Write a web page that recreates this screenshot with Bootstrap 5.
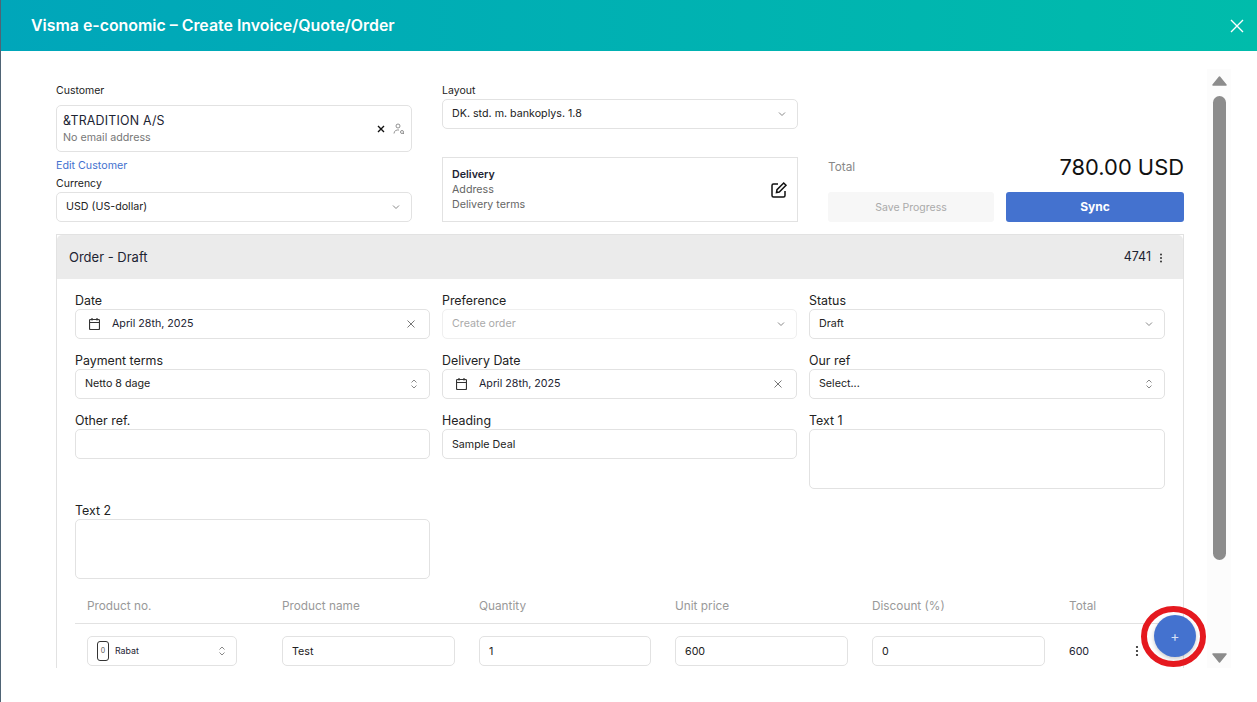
<!DOCTYPE html>
<html lang="en">
<head>
    <meta charset="UTF-8">
    <meta name="viewport" content="width=device-width, initial-scale=1.0">
    <title>Visma e-conomic</title>
    <link href="https://cdn.jsdelivr.net/npm/bootstrap@5.3.0/dist/css/bootstrap.min.css" rel="stylesheet">
    <style>
        html, body { height: 100%; overflow: hidden; }
        body { font-family: Inter, "Liberation Sans", sans-serif; color: #1d2433; background: #fff; }
        .app-shell { position: relative; height: 702px; border-left: 1px solid #4f6475; }
        .top-bar { height: 51px; padding: 0 13px 0 30px; background: linear-gradient(90deg, #00a6ba, #00bcab); color: #fff; font-size: 15.9px; font-weight: 600; }
        .work-area { height: 617px; overflow: hidden; padding-left: 55px; }
        .form-pane { width: 1128px; padding-top: 33px; flex: none; }
        .top-grid { display: grid; grid-template-columns: repeat(3, 356px); column-gap: 30px; height: 138px; }
        .field-label { display: block; height: 14px; margin-bottom: 1px; font-size: 10.5px; line-height: 14px; color: #222; }
        .customer-label { margin-bottom: 7px; }
        .customer-box { height: 47px; padding: 7px 6px; border: 1px solid #e2e2e2; border-radius: 5px; }
        .customer-name { font-size: 12.4px; line-height: 16px; letter-spacing: .2px; }
        .customer-mail { margin-top: 2px; font-size: 10.7px; line-height: 14px; color: #777; }
        .edit-link { display: block; height: 18px; margin-top: 5px; font-size: 10.7px; line-height: 18px; color: #4472cf; text-decoration: none; }
        .currency-label { margin-top: 2px; margin-bottom: 1px; }
        .form-select, .form-control { height: 30px; min-height: 30px; padding: 0 9px; border: 1px solid #e2e2e2; border-radius: 5px; font-size: 10.7px; color: #222; box-shadow: none; }
        .form-select { padding-top: 1px; background-size: 10px 10px; background-position: right 10px center; background-image: url("data:image/svg+xml,%3csvg xmlns='http://www.w3.org/2000/svg' viewBox='0 0 10 10'%3e%3cpath fill='none' stroke='%23888' d='M2 3.5 5 6.5 8 3.5'/%3e%3c/svg%3e"); }
        .form-select.updown { background-image: url("data:image/svg+xml,%3csvg xmlns='http://www.w3.org/2000/svg' viewBox='0 0 10 10'%3e%3cpath fill='none' stroke='%23888' d='M2.5 3.5 5 1 7.5 3.5M2.5 6.5 5 9 7.5 6.5'/%3e%3c/svg%3e"); }
        .form-select:disabled { background-color: #fff; border-color: #efefef; color: #aaa; opacity: 1; }
        .form-control.tall { height: 60px; resize: none; }
        .delivery-box { height: 65px; margin-top: 28px; padding: 9px; border: 1px solid #e2e2e2; font-size: 10.7px; line-height: 15px; color: #666; }
        .delivery-box strong { color: #1d2433; font-weight: 600; }
        .total-side { padding-top: 71px; }
        .total-label { padding-top: 1px; font-size: 11.8px; color: #888; }
        .total-value { font-size: 21.9px; line-height: 24px; color: #111; }
        .save-btn, .sync-btn { height: 30px; border: 0; border-radius: 3px; padding: 0; font-size: 10.5px; }
        .save-btn { width: 166px; padding-top: 1px; background: #f7f7f7; color: #aaa; }
        .sync-btn { width: 178px; background: #4472cf; color: #fff; font-size: 12px; font-weight: 700; }
        .order-panel { margin-top: 12px; border-radius: 0; border: 1px solid #e2e2e2; height: 460px; }
        .order-head { height: 44px; padding: 1px 20px 0 12px; background: #ebebeb; border: 0; border-radius: 0; font-size: 13px; }
        .order-count { font-size: 12.5px; }
        .order-fields { display: grid; grid-template-columns: 355px 355px 356px; column-gap: 12px; padding: 14px 18px 0; }
        .order-field { height: 60px; }
        .order-field.tall-field { height: 90px; }
        .order-field .field-label { height: 15px; margin-bottom: 1px; font-size: 12.4px; line-height: 16px; }
        .date-box { height: 30px; padding: 0 14px 0 13px; border: 1px solid #e2e2e2; border-radius: 5px; font-size: 10.7px; }
        .date-text { margin-left: 12px; }
        .date-icon { stroke-width: 1.2; }
        .product-grid { display: grid; grid-template-columns: 195px 197px 196px 197px 197px 68px 40px; margin: 0 18px; }
        .product-head { height: 28px; margin-top: 3px; padding-top: 2px; border-bottom: 1px solid #e2e2e2; font-size: 11.8px; color: #999; }
        .product-head span { padding-left: 12px; }
        .product-row { padding-top: 12px; font-size: 10.7px; }
        .product-row > div { padding: 0 12px; }
        .product-row > .kebab-cell { padding: 0 10px; }
        .product-pick { width: 150px; height: 30px; padding: 0 9px; border: 1px solid #e2e2e2; border-radius: 5px; font-size: 8.8px; }
        .product-zero { display: inline-block; width: 12px; height: 20px; margin-right: 6px; border: 1px solid #333; border-radius: 3px; text-align: center; line-height: 18px; color: #555; font-size: 7px; }
        .scroll-rail { width: 24px; height: 599px; margin: 18px 0 0 23px; background: #fcfcfc; flex: none; }
        .scroll-thumb { width: 13px; height: 464px; margin: 10px auto 0; background: #8c8c8c; border-radius: 7px; flex: none; }
        .rail-arrow-up { margin-top: 7px; flex: none; }
        .rail-arrow-down { margin-top: 93px; flex: none; }
        .fab-add { position: absolute; left: 1153px; top: 615px; width: 42px; height: 42px; padding: 0; border: 0; border-radius: 50%; background: #4472cf; color: #d6e0f5; font-size: 14px; line-height: 42px; box-shadow: 0 2px 4px rgba(0,0,0,.2); }
        .red-ring { position: absolute; left: 1139px; top: 606px; }
    </style>
</head>
<body>
    <div class="app-shell">
        <div class="top-bar d-flex align-items-center justify-content-between">
            <span>Visma e-conomic – Create Invoice/Quote/Order</span>
            <svg width="14" height="14" viewBox="0 0 14 14"><path d="M1 1 13 13M13 1 1 13" stroke="#fff" stroke-width="1.4"/></svg>
        </div>
        <div class="work-area d-flex">
            <div class="form-pane">
                <div class="top-grid">
                    <div>
                        <label class="field-label customer-label">Customer</label>
                        <div class="customer-box d-flex align-items-center justify-content-between">
                            <div>
                                <div class="customer-name">&amp;TRADITION A/S</div>
                                <div class="customer-mail">No email address</div>
                            </div>
                            <div class="d-flex align-items-center gap-2">
                                <svg width="8" height="8" viewBox="0 0 8 8"><path d="M1 1 7 7M7 1 1 7" stroke="#111" stroke-width="1.4"/></svg>
                                <svg width="12" height="12" viewBox="0 0 12 12" fill="none" stroke="#777" stroke-width=".8"><circle cx="5" cy="3" r="2"/><path d="M1 10.5C1 7.5 4 6.6 6 7"/><circle cx="9" cy="9" r="1.5"/><path d="M10 10 11 11"/></svg>
                            </div>
                        </div>
                        <a class="edit-link" href="#">Edit Customer</a>
                        <label class="field-label currency-label">Currency</label>
                        <select class="form-select"><option>USD (US-dollar)</option></select>
                    </div>
                    <div>
                        <label class="field-label">Layout</label>
                        <select class="form-select"><option>DK. std. m. bankoplys. 1.8</option></select>
                        <div class="delivery-box d-flex align-items-center justify-content-between">
                            <div>
                                <strong>Delivery</strong><br>Address<br>Delivery terms
                            </div>
                            <svg width="18" height="18" viewBox="0 0 18 18" fill="none" stroke="#111" stroke-width="1.5"><path d="M8 3H3.5A1.5 1.5 0 0 0 2 4.5V14.5A1.5 1.5 0 0 0 3.5 16H13.5A1.5 1.5 0 0 0 15 14.5V10"/><path d="M6.5 11.5 7 8.7 13.7 2 16 4.3 9.3 11Z"/></svg>
                        </div>
                    </div>
                    <div class="total-side">
                        <div class="d-flex justify-content-between align-items-center" style="height:24px">
                            <span class="total-label">Total</span>
                            <span class="total-value">780.00 USD</span>
                        </div>
                        <div class="d-flex justify-content-between" style="margin-top:13px">
                            <button class="btn save-btn" type="button">Save Progress</button>
                            <button class="btn sync-btn" type="button">Sync</button>
                        </div>
                    </div>
                </div>
                <div class="card order-panel">
                    <div class="card-header order-head d-flex align-items-center justify-content-between">
                        <span>Order - Draft</span>
                        <span class="order-count d-flex align-items-center gap-2">4741
                            <svg width="4" height="10" viewBox="0 0 4 10" fill="#333"><circle cx="2" cy="1.5" r="1"/><circle cx="2" cy="5" r="1"/><circle cx="2" cy="8.5" r="1"/></svg>
                        </span>
                    </div>
                    <div class="order-fields">
                        <div class="order-field">
                            <label class="field-label">Date</label>
                            <div class="date-box d-flex align-items-center">
                                <svg class="date-icon" width="11" height="12" viewBox="0 0 11 12" fill="none" stroke="#333"><rect x=".5" y="1.5" width="10" height="10" rx="1"/><path d="M.5 4.5H10.5M3 0V2.5M8 0V2.5"/></svg>
                                <span class="date-text flex-grow-1">April 28th, 2025</span>
                                <svg width="8" height="8" viewBox="0 0 8 8"><path d="M.5.5 7.5 7.5M7.5.5 .5 7.5" stroke="#777"/></svg>
                            </div>
                        </div>
                        <div class="order-field">
                            <label class="field-label">Preference</label>
                            <select class="form-select" disabled><option>Create order</option></select>
                        </div>
                        <div class="order-field">
                            <label class="field-label">Status</label>
                            <select class="form-select"><option>Draft</option></select>
                        </div>
                        <div class="order-field">
                            <label class="field-label">Payment terms</label>
                            <select class="form-select updown"><option>Netto 8 dage</option></select>
                        </div>
                        <div class="order-field">
                            <label class="field-label">Delivery Date</label>
                            <div class="date-box d-flex align-items-center">
                                <svg class="date-icon" width="11" height="12" viewBox="0 0 11 12" fill="none" stroke="#333"><rect x=".5" y="1.5" width="10" height="10" rx="1"/><path d="M.5 4.5H10.5M3 0V2.5M8 0V2.5"/></svg>
                                <span class="date-text flex-grow-1">April 28th, 2025</span>
                                <svg width="8" height="8" viewBox="0 0 8 8"><path d="M.5.5 7.5 7.5M7.5.5 .5 7.5" stroke="#777"/></svg>
                            </div>
                        </div>
                        <div class="order-field">
                            <label class="field-label">Our ref</label>
                            <select class="form-select updown"><option>Select...</option></select>
                        </div>
                        <div class="order-field">
                            <label class="field-label">Other ref.</label>
                            <input class="form-control" type="text">
                        </div>
                        <div class="order-field">
                            <label class="field-label">Heading</label>
                            <input class="form-control" type="text" value="Sample Deal">
                        </div>
                        <div class="order-field tall-field">
                            <label class="field-label">Text 1</label>
                            <textarea class="form-control tall"></textarea>
                        </div>
                        <div class="order-field tall-field">
                            <label class="field-label">Text 2</label>
                            <textarea class="form-control tall"></textarea>
                        </div>
                    </div>
                    <div class="product-grid product-head">
                        <span>Product no.</span><span>Product name</span><span>Quantity</span><span>Unit price</span><span>Discount (%)</span><span>Total</span><span></span>
                    </div>
                    <div class="product-grid product-row">
                        <div>
                            <div class="product-pick d-flex align-items-center justify-content-between">
                                <span class="d-flex align-items-center"><span class="product-zero">0</span>Rabat</span>
                                <svg width="10" height="10" viewBox="0 0 10 10" fill="none" stroke="#888"><path d="M2.5 3.5 5 1 7.5 3.5M2.5 6.5 5 9 7.5 6.5"/></svg>
                            </div>
                        </div>
                        <div><input class="form-control" type="text" value="Test"></div>
                        <div><input class="form-control" type="text" value="1"></div>
                        <div><input class="form-control" type="text" value="600"></div>
                        <div><input class="form-control" type="text" value="0"></div>
                        <div class="d-flex align-items-center" style="height:32px">600</div>
                        <div class="kebab-cell d-flex align-items-center" style="height:30px">
                            <svg width="4" height="12" viewBox="0 0 4 12" fill="#222"><circle cx="2" cy="2" r="1.1"/><circle cx="2" cy="6" r="1.1"/><circle cx="2" cy="10" r="1.1"/></svg>
                        </div>
                    </div>
                </div>
            </div>
            <div class="scroll-rail d-flex flex-column align-items-center">
                <svg class="rail-arrow-up" width="15" height="10" viewBox="0 0 15 10" fill="#8c8c8c" stroke="#8c8c8c" stroke-linejoin="round" stroke-width="1.5"><path d="M7.5 1 14 9H1Z"/></svg>
                <div class="scroll-thumb"></div>
                <svg class="rail-arrow-down" width="15" height="10" viewBox="0 0 15 10" fill="#8c8c8c" stroke="#8c8c8c" stroke-linejoin="round" stroke-width="1.5"><path d="M7.5 9 14 1H1Z"/></svg>
            </div>
        </div>
        <button class="fab-add" type="button">+</button>
        <svg class="red-ring" width="67" height="62" viewBox="0 0 67 62"><ellipse cx="33.5" cy="30.5" rx="29.5" ry="27.5" fill="none" stroke="#e5191f" stroke-width="6"/></svg>
    </div>
    <script src="https://cdn.jsdelivr.net/npm/bootstrap@5.3.0/dist/js/bootstrap.bundle.min.js"></script>
</body>
</html>
